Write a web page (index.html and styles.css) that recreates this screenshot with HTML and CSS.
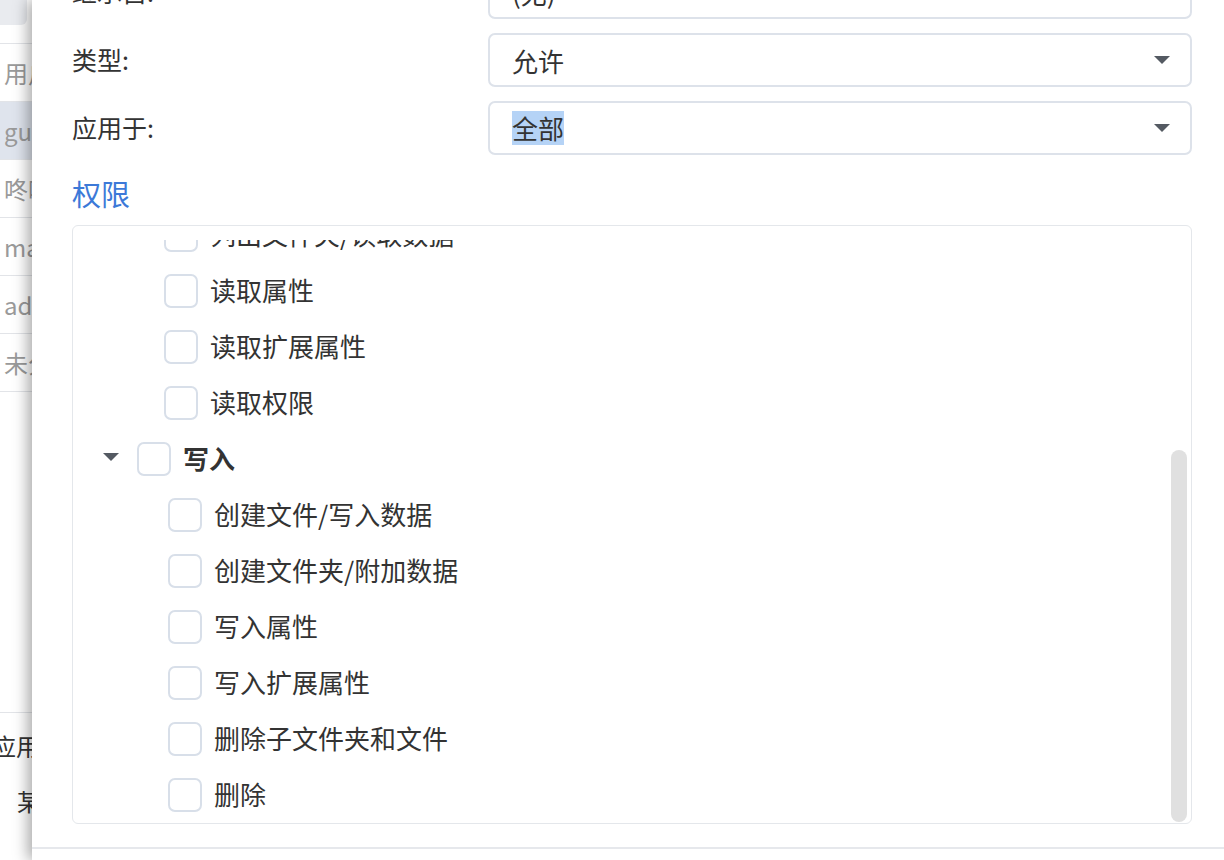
FILE: index.html
```html
<!DOCTYPE html>
<html lang="zh-CN">
<head>
    <meta charset="UTF-8">
    <meta name="viewport" content="width=device-width, initial-scale=1.0">
    <title>权限编辑器</title>
    <link rel="stylesheet" href="styles.css">
</head>
<body>
    <div class="page">
        <div class="page-search"></div>
        <ul class="user-list">
            <li>用户或组</li>
            <li class="active">guest</li>
            <li>咚咚</li>
            <li>mario</li>
            <li>admin</li>
            <li>未分配</li>
        </ul>
        <div class="page-footer">
            <div class="apply">应用</div>
            <div class="note">某些设置</div>
        </div>
    </div>

    <div class="drawer">
        <div class="drawer-body scroll-end">
            <div class="form-row">
                <label>继承自:</label>
                <div class="select"><span>(无)</span></div>
            </div>
            <div class="form-row">
                <label>类型:</label>
                <div class="select"><span>允许</span><i class="caret"></i></div>
            </div>
            <div class="form-row">
                <label>应用于:</label>
                <div class="select"><span class="selected">全部</span><i class="caret"></i></div>
            </div>

            <h2 class="section-title">权限</h2>

            <div class="perm-box">
                <div class="perm-list scroll-end">
                    <div class="perm-group">
                        <div class="perm-row parent"><i class="caret"></i><span class="check"></span><span class="text">管理</span></div>
                        <div class="perm-row child"><span class="check"></span><span class="text">更改权限</span></div>
                        <div class="perm-row child"><span class="check"></span><span class="text">取得所有权</span></div>
                    </div>
                    <div class="perm-group read">
                        <div class="perm-row parent"><i class="caret"></i><span class="check"></span><span class="text">读取</span></div>
                        <div class="perm-row child"><span class="check"></span><span class="text">遍历文件夹/执行文件</span></div>
                        <div class="perm-row child"><span class="check"></span><span class="text">列出文件夹/读取数据</span></div>
                        <div class="perm-row child"><span class="check"></span><span class="text">读取属性</span></div>
                        <div class="perm-row child"><span class="check"></span><span class="text">读取扩展属性</span></div>
                        <div class="perm-row child"><span class="check"></span><span class="text">读取权限</span></div>
                    </div>
                    <div class="perm-group">
                        <div class="perm-row parent"><i class="caret"></i><span class="check"></span><span class="text">写入</span></div>
                        <div class="perm-row child"><span class="check"></span><span class="text">创建文件/写入数据</span></div>
                        <div class="perm-row child"><span class="check"></span><span class="text">创建文件夹/附加数据</span></div>
                        <div class="perm-row child"><span class="check"></span><span class="text">写入属性</span></div>
                        <div class="perm-row child"><span class="check"></span><span class="text">写入扩展属性</span></div>
                        <div class="perm-row child"><span class="check"></span><span class="text">删除子文件夹和文件</span></div>
                        <div class="perm-row child"><span class="check"></span><span class="text">删除</span></div>
                    </div>
                </div>
                <div class="scroll-thumb"></div>
            </div>
        </div>
        <div class="drawer-footer"></div>
    </div>

    <script>
        document.querySelectorAll('.scroll-end').forEach(el => {
            el.scrollTop = el.scrollHeight;
        });
    </script>
</body>
</html>
```

FILE: styles.css
```css
* { margin: 0; padding: 0; box-sizing: border-box; }
html, body { height: 100%; overflow: hidden; }
body {
    font-family: 'Noto Sans CJK SC', 'Noto Sans', sans-serif;
    background: #fff;
    color: #333;
    position: relative;
}

/* page underneath the drawer, only its left edge shows */
.page {
    width: 32px;
    height: 100vh;
    overflow: hidden;
    display: flex;
    flex-direction: column;
}
.page-search {
    width: 27px;
    height: 25px;
    background: #e9ebef;
    border-radius: 0 0 6px 0;
    margin-bottom: 18px;
}
.user-list { list-style: none; border-top: 1px solid #e2e4e8; }
.user-list li {
    height: 58px;
    line-height: 57px;
    padding-left: 4px;
    font-size: 24px;
    color: #9a9a9a;
    border-bottom: 1px solid #e2e4e8;
    white-space: nowrap;
    overflow: hidden;
}
.user-list li.active { background: #dfe4ed; }
.page-footer {
    margin-top: auto;
    height: 148px;
    border-top: 1px solid #e2e4e8;
    font-size: 24px;
    color: #333;
    white-space: nowrap;
}
.apply { height: 66px; line-height: 66px; text-indent: -8px; }
.note { height: 44px; line-height: 44px; padding-left: 17px; }

/* drawer */
.drawer {
    position: absolute;
    top: 0;
    left: 32px;
    right: 0;
    height: 100vh;
    background: #fff;
    box-shadow: -4px 0 14px rgba(0, 0, 0, 0.35);
    overflow: hidden;
}
.drawer-body {
    height: 847px;
    overflow: hidden;
    padding: 20px 32px 23px 40px;
}
.drawer-footer { height: 80px; border-top: 2px solid #e6e8ec; }

.form-row {
    display: grid;
    grid-template-columns: 416px 1fr;
    align-items: center;
    height: 54px;
    margin-bottom: 14px;
}
.form-row label { font-size: 25px; color: #333; margin-top: -3px; }
.select {
    height: 54px;
    border: 2px solid #dde2ea;
    border-radius: 7px;
    padding: 0 20px 0 22px;
    display: flex;
    align-items: center;
    justify-content: space-between;
    font-size: 26px;
    color: #333;
}
.select .selected { background: #b5d3f6; line-height: 34px; }
.caret {
    display: block;
    width: 0;
    height: 0;
    border-left: 8px solid transparent;
    border-right: 8px solid transparent;
    border-top: 8px solid #545a62;
}

.section-title {
    margin: 18px 0 12px;
    font-size: 29px;
    font-weight: 400;
    line-height: 40px;
    color: #3c79d8;
}

.perm-box {
    position: relative;
    height: 599px;
    border: 1px solid #e4e7eb;
    border-radius: 6px;
    padding-top: 14px;
}
.perm-list {
    height: 583px;
    overflow: hidden;
    padding: 16px 0 2px;
}
.scroll-thumb {
    position: absolute;
    right: 4px;
    bottom: 1px;
    width: 16px;
    height: 372px;
    background: #e0e0e0;
    border-radius: 8px;
}

.perm-row {
    height: 56px;
    display: flex;
    align-items: center;
    font-size: 26px;
    color: #333;
    white-space: nowrap;
}
.perm-row.parent { padding-left: 30px; }
.perm-row.parent .caret { margin-right: 18px; }
.perm-row.parent .text { font-weight: 700; }
.perm-row.child { padding-left: 95px; }
.read .perm-row.child { padding-left: 91px; }
.check {
    width: 34px;
    height: 34px;
    flex-shrink: 0;
    border: 2px solid #d8dfe9;
    border-radius: 7px;
    background: #fff;
    margin-right: 12px;
    margin-top: 3px;
}
```
